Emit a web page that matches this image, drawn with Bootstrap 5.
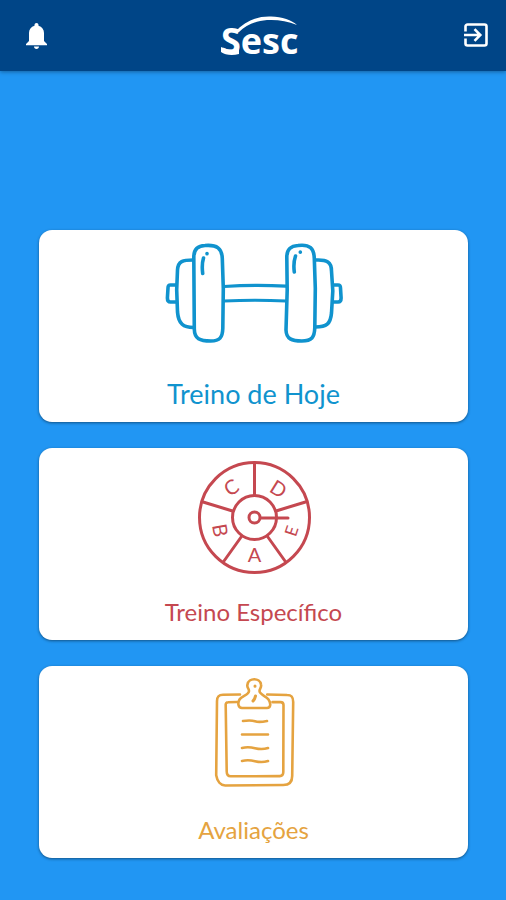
<!DOCTYPE html>
<html lang="pt-BR">
<head>
<meta charset="utf-8">
<meta name="viewport" content="width=device-width, initial-scale=1">
<title>Sesc</title>
<link href="https://cdn.jsdelivr.net/npm/bootstrap@5.3.0/dist/css/bootstrap.min.css" rel="stylesheet">
<style>
  body { background: #2196f3; font-family: Lato, "Open Sans", sans-serif; }
  .app-bar { background: #004587; height: 71px; padding: 0 16px 0 24px; box-shadow: 0 1px 4px rgba(0, 0, 0, .35); }
  .icon-button { line-height: 0; color: #fff; }
  .menu-list { padding: 159px 38px 43px 39px; gap: 26px; }
  .menu-card { border-radius: 13px; box-shadow: 0 1px 3px rgba(0, 0, 0, .45); }
  .menu-art { width: 200px; height: 136px; fill: none; stroke: currentColor; stroke-linecap: round; stroke-linejoin: round; }
  .menu-art text { fill: currentColor; stroke: none; font-size: 20px; text-anchor: middle; }
  .menu-art .letter-sm { font-size: 17px; }
  .menu-label { font-size: 24px; line-height: 56px; }
  .menu-label-lg { font-size: 27px; }
  .tone-blue { color: #1093ce; }
  .tone-red { color: #c54850; }
  .tone-orange { color: #e5a340; }
  .logo-text { font-family: "Open Sans", sans-serif; font-size: 36px; font-weight: 700; }
</style>
</head>
<body>
<header class="app-bar d-flex align-items-center justify-content-between">
  <button type="button" class="icon-button btn p-0 border-0" aria-label="Notificações">
    <svg width="24" height="28" viewBox="0 0 24 28" fill="#fff"><path d="M12.500 1c-1.200 0-2 .8-2 2v.7C7 4.700 5 7.500 5 11v8l-3 3v1.200h21V22l-3-3v-8c0-3.500-2-6.300-5.500-7.300V3c0-1.200-.8-2-2-2zM10 24.500h5c0 1.500-1.100 2.500-2.500 2.500S10 26 10 24.500z"/></svg>
  </button>
  <a href="#" class="icon-button" aria-label="Sesc">
    <svg width="108" height="70" viewBox="200 0 108 70" fill="#fff">
      <text class="logo-text" x="220" y="53">Sesc</text>
      <path d="M234 31C244 20 256 15 270 15.500C281 16 291 19 296 24C286 19.500 276 18.500 266 19C254 20 245 24 238 31z"/>
      <path d="M220 46C226 49 232 50 238 48L238 53C231 55 224 54 220 51z"/>
    </svg>
  </a>
  <button type="button" class="icon-button btn p-0 border-0" aria-label="Sair">
    <svg width="28" height="28" viewBox="0 0 28 28" fill="none" stroke="#fff" stroke-width="2.600"><path d="M3.500 9.500V4.500a2 2 0 0 1 2-2h17a2 2 0 0 1 2 2v17a2 2 0 0 1-2 2h-17a2 2 0 0 1-2-2v-5M2 13h15.500M12.500 7.200l5.800 5.800-5.800 5.800"/></svg>
  </button>
</header>

<main class="menu-list d-flex flex-column">
  <a href="#" class="menu-card tone-blue bg-white d-flex flex-column align-items-center text-decoration-none">
    <svg class="menu-art" viewBox="153 230 200 136" stroke-width="3.600" aria-hidden="true">
      <path d="M204 245.500c12-1 17 3 17.300 13l1 30-.5 40c-.3 9-3 12.500-12 12.500-11 0-16.300-2-16.500-12l-.5-72c0-8 4-11.200 11.200-11.500z"/>
      <path d="M297 245.500c12-1.500 16 3 16.300 13l1 30-.5 39c-.3 10-3 13.500-13 13.500-10 0-15.500-2-15.800-11l1.200-40-.4-33c0-8 4-11 11.200-11.500z"/>
      <path d="M192 260c-10 0-15 1-15.500 10l-.8 20 .8 22c1 12 6 15.500 16 15.500"/>
      <path d="M315 260c11-.5 15.500 2 15.500 11l1.300 20-1.300 22c-1 11-5 14-16 14"/>
      <path d="M175 285h-5.500c-2 0-2.500 1-2.500 3l-.6 10c0 2.500 1 4 3 4h6M332 285h5c2 0 2.500 1 2.500 3l.6 10c0 2.500-1 4-3 4h-5"/>
      <path d="M223 286.500q31-2 62-.3M223 301q31-1.500 62 0" stroke-width="3.200"/>
      <path d="M202.500 258c-1.500 5-1.500 10-.8 15.500M206 253.500v.2M294.500 256c-1.700 5-2 10-1.200 16M299.300 252v.2"/>
    </svg>
    <span class="menu-label menu-label-lg">Treino de Hoje</span>
  </a>

  <a href="#" class="menu-card tone-red bg-white d-flex flex-column align-items-center text-decoration-none">
    <svg class="menu-art" viewBox="153 448 200 136" stroke-width="3" aria-hidden="true">
      <circle cx="253.500" cy="517.500" r="55"/>
      <circle cx="253.500" cy="517.500" r="22"/>
      <circle cx="253.500" cy="517.500" r="5.500"/>
      <path d="M253.500 463v32M202 502l29.500 9M304.500 502l-29.500 9M223 561l17.500-24.500M284 561l-17.500-24.500M259.500 518h27.500"/>
      <text transform="translate(230.500 487.500) rotate(-31)" y="7">C</text>
      <text transform="translate(277.500 489) rotate(32)" y="7">D</text>
      <text transform="translate(219 530.500) rotate(80)" y="7">B</text>
      <text class="letter-sm" transform="translate(290.500 531) rotate(-72)" y="6">E</text>
      <text x="253.500" y="562">A</text>
    </svg>
    <span class="menu-label">Treino Específico</span>
  </a>

  <a href="#" class="menu-card tone-orange bg-white d-flex flex-column align-items-center text-decoration-none">
    <svg class="menu-art" viewBox="153 666 200 136" stroke-width="2.600" aria-hidden="true">
      <path d="M239 694.500l-17 .3c-4.500 0-6 2-6 6.500l-.8 74c1 6 4.500 10 9 10.200l58-.5c6 0 9-3 9-9l1-74c0-5-1.500-7-6-7l-20-.5"/>
      <path d="M236 702l-9 .3c-1.500 0-2.500 1-2.300 3l1 66c0 3 1.200 5 4 5l49-.2c2.500 0 3.600-1.500 3.600-4l.2-67c0-2-1-3-3-3h-8"/>
      <path d="M241 708c-4-.3-4.500-5-2.500-8.500 2-3.500 9.500-4.500 9.500-8.500 0-3-2.500-3.500-1.500-6.500 1-7 12.500-7 13.500 0 .8 3-1.500 4-1.500 6.500 0 3.500 6.500 5 9 8.500 2.500 3.500 2.500 8.500-1.500 8.500z"/>
      <path d="M254 686v.2M254.500 696l-1 3-1.500 2" stroke-width="3"/>
      <path d="M242 721q8-1 12 .3t12-.3M241 734.500h26M241 748q6-1.500 13 .2t13-.2M241 761q6-1.500 13 .2t13-.2"/>
    </svg>
    <span class="menu-label">Avaliações</span>
  </a>
</main>
<script src="https://cdn.jsdelivr.net/npm/bootstrap@5.3.0/dist/js/bootstrap.bundle.min.js"></script>
</body>
</html>
